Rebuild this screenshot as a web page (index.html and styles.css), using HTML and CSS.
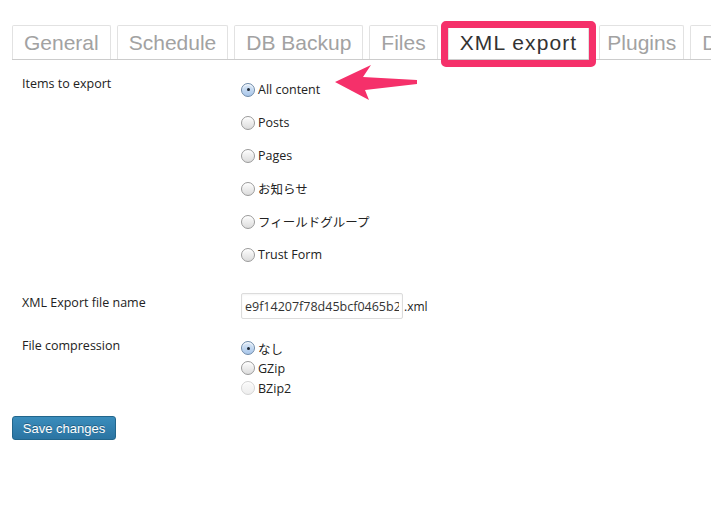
FILE: index.html
```html
<!DOCTYPE html>
<html lang="ja">
<head>
  <meta charset="UTF-8">
  <title>XML export</title>
  <link rel="stylesheet" href="styles.css">
</head>
<body>

  <div class="wrap">
    <div class="tabs">
      <a class="tab">General</a>
      <a class="tab">Schedule</a>
      <a class="tab">DB Backup</a>
      <a class="tab">Files</a>
      <a class="tab tab-active">XML export</a>
      <a class="tab tab-narrow">Plugins</a>
      <a class="tab">Dashboard</a>
    </div>

    <div class="form-table">
      <div class="row row-items">
        <div class="th">Items to export</div>
        <div class="td">
          <label class="opt tall"><input type="radio" name="content" checked> All content</label>
          <label class="opt tall"><input type="radio" name="content"> Posts</label>
          <label class="opt tall"><input type="radio" name="content"> Pages</label>
          <label class="opt tall"><input type="radio" name="content"> お知らせ</label>
          <label class="opt tall"><input type="radio" name="content"> フィールドグループ</label>
          <label class="opt tall"><input type="radio" name="content"> Trust Form</label>

          <!-- annotation arrow -->
          <svg class="arrow" width="90" height="40" viewBox="0 0 90 40">
            <path d="M2 17 L38 0 L30 12 L84 15 L84 19 L32 25 L36 35 Z" fill="#f5306a"/>
          </svg>
        </div>
      </div>

      <div class="row row-file">
        <div class="th">XML Export file name</div>
        <div class="td">
          <input class="text" type="text" value="e9f14207f78d45bcf0465b2a91c.xml"><span class="suffix">.xml</span>
        </div>
      </div>

      <div class="row row-comp">
        <div class="th">File compression</div>
        <div class="td">
          <label class="opt"><input type="radio" name="comp" checked> なし</label>
          <label class="opt"><input type="radio" name="comp"> GZip</label>
          <label class="opt"><input type="radio" name="comp" disabled> BZip2</label>
        </div>
      </div>
    </div>

    <button class="button-primary">Save changes</button>
  </div>

</body>
</html>
```

FILE: styles.css
```css
body {
  margin: 0;
  padding: 0;
  background: #fff;
  color: #222;
  font-family: 'Open Sans', 'Noto Sans CJK JP', sans-serif;
  font-size: 12.5px;
  overflow: hidden;
}

.wrap {
  padding: 25px 0 0 12px;
}

.tabs {
  display: flex;
  border-bottom: 1px solid #ccc;
  white-space: nowrap;
}

.tab {
  display: block;
  height: 33px;
  line-height: 33px;
  padding: 0 11px;
  margin-right: 6px;
  border: 1px solid #e2e2e2;
  border-bottom: none;
  border-radius: 2px 2px 0 0;
  font-family: 'Liberation Sans', sans-serif;
  font-size: 21px;
  color: #a2a2a2;
  flex-shrink: 0;
}

.tab-active {
  position: relative;
  color: #333;
  letter-spacing: 1.1px;
  margin-left: 4px;
  margin-right: 10px;
}

.tab-active::after {
  content: "";
  position: absolute;
  left: -8px;
  right: -8px;
  top: -5px;
  bottom: -8px;
  border: 7px solid #f5306a;
  border-radius: 5px;
}

.tab-narrow {
  padding: 0 7px;
}

.row {
  display: grid;
  grid-template-columns: 229px 1fr;
}

.th {
  padding-left: 10px;
  line-height: 18px;
}

.row-items .th { padding-top: 15px; }
.row-items .td { padding-top: 13px; position: relative; }

.row-file .th { padding-top: 23px; }
.row-file .td { padding-top: 22px; display: flex; align-items: center; }

.row-comp .th { padding-top: 18px; }
.row-comp .td { padding-top: 19px; }

.opt {
  display: flex;
  align-items: center;
  gap: 3px;
  height: 20px;
}

.opt.tall {
  height: 33px;
}

input[type="radio"] {
  appearance: none;
  width: 14px;
  height: 14px;
  margin: 0;
  border: 1px solid #9a9a9a;
  border-radius: 50%;
  background: linear-gradient(#fdfdfd, #dcdcdc);
  box-shadow: inset 0 1px 1px #fff;
  position: relative;
}

input[type="radio"]:checked {
  border-color: #6d89a8;
  background: linear-gradient(#dce9f7, #a8c6ea);
}

input[type="radio"]:checked::after {
  content: "";
  position: absolute;
  left: 4.5px;
  top: 4.5px;
  width: 3px;
  height: 3px;
  border-radius: 50%;
  background: #1d2733;
}

input[type="radio"]:disabled {
  border-color: #d4d4d4;
  background: linear-gradient(#fafafa, #eeeeee);
}

.arrow {
  position: absolute;
  left: 92px;
  top: 5px;
}

.text {
  width: 162px;
  height: 26px;
  box-sizing: border-box;
  border: 1px solid #dcdcdc;
  border-radius: 2px;
  padding: 0 3px;
  font-family: 'Open Sans', sans-serif;
  font-size: 12.5px;
  color: #333;
  box-shadow: inset 0 1px 2px rgba(0, 0, 0, 0.05);
}

.suffix {
  margin-left: 1px;
  font-size: 12px;
}

.button-primary {
  display: block;
  margin-top: 18px;
  width: 104px;
  height: 24px;
  padding: 0;
  border: 1px solid #22668c;
  border-radius: 3px;
  background: linear-gradient(#3a8dbc, #2b74a2);
  color: #fff;
  font-family: 'Liberation Sans', sans-serif;
  font-size: 13px;
  text-shadow: 0 -1px 0 rgba(0, 0, 0, 0.3);
  cursor: pointer;
}
```
